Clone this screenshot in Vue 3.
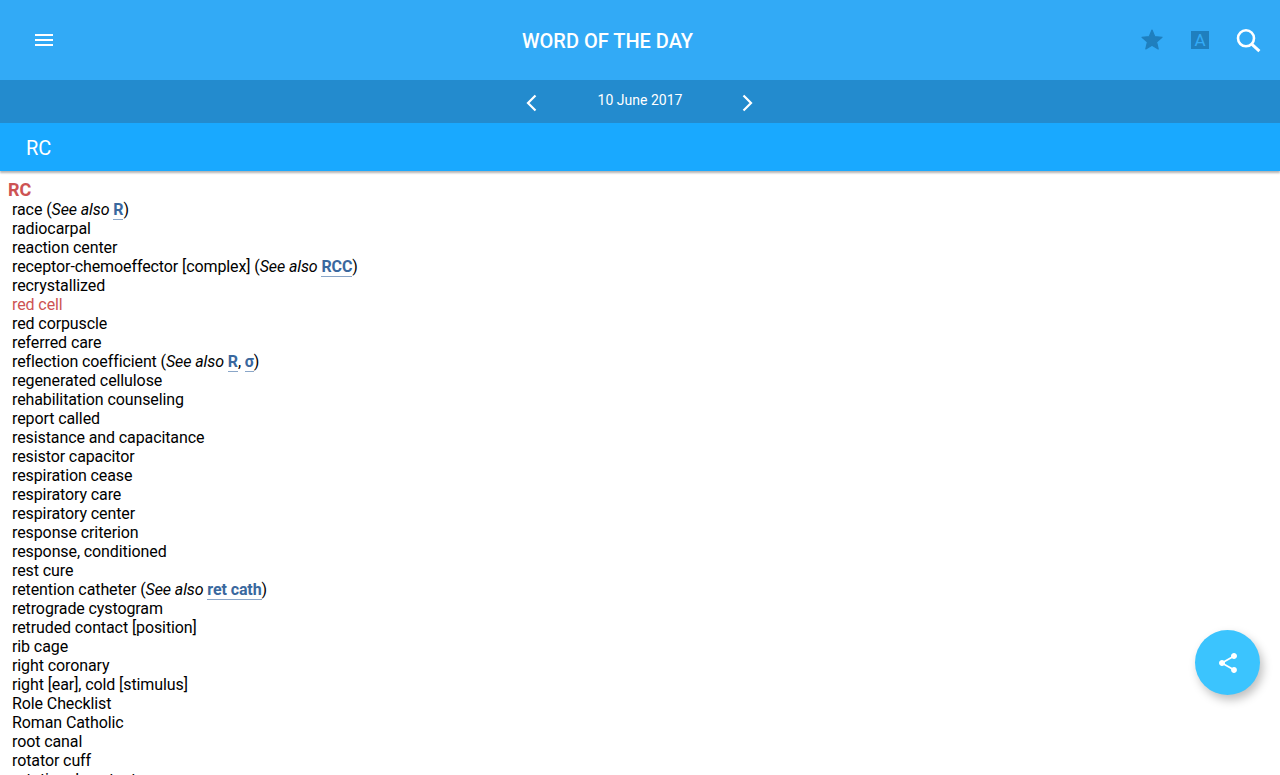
<script setup>
const terms = [
  [{ t: 'race (' }, { i: 'See also ' }, { a: 'R' }, { t: ')' }],
  [{ t: 'radiocarpal' }],
  [{ t: 'reaction center' }],
  [{ t: 'receptor-chemoeffector [complex] (' }, { i: 'See also ' }, { a: 'RCC' }, { t: ')' }],
  [{ t: 'recrystallized' }],
  [{ r: 'red cell' }],
  [{ t: 'red corpuscle' }],
  [{ t: 'referred care' }],
  [{ t: 'reflection coefficient (' }, { i: 'See also ' }, { a: 'R' }, { t: ', ' }, { a: 'σ' }, { t: ')' }],
  [{ t: 'regenerated cellulose' }],
  [{ t: 'rehabilitation counseling' }],
  [{ t: 'report called' }],
  [{ t: 'resistance and capacitance' }],
  [{ t: 'resistor capacitor' }],
  [{ t: 'respiration cease' }],
  [{ t: 'respiratory care' }],
  [{ t: 'respiratory center' }],
  [{ t: 'response criterion' }],
  [{ t: 'response, conditioned' }],
  [{ t: 'rest cure' }],
  [{ t: 'retention catheter (' }, { i: 'See also ' }, { a: 'ret cath' }, { t: ')' }],
  [{ t: 'retrograde cystogram' }],
  [{ t: 'retruded contact [position]' }],
  [{ t: 'rib cage' }],
  [{ t: 'right coronary' }],
  [{ t: 'right [ear], cold [stimulus]' }],
  [{ t: 'Role Checklist' }],
  [{ t: 'Roman Catholic' }],
  [{ t: 'root canal' }],
  [{ t: 'rotator cuff' }],
  [{ t: 'rotational contact' }],
]
</script>

<template>
  <div class="page">
    <header class="top">
      <button class="icon menu" aria-label="Menu">
        <svg width="24" height="24" viewBox="0 0 24 24"><path d="M3 6h18v2H3zM3 11h18v2H3zM3 16h18v2H3z" fill="#fff" /></svg>
      </button>
      <h1 class="title">WORD OF THE DAY</h1>
      <div class="actions">
        <span class="action">
          <svg width="24" height="24" viewBox="0 0 24 24"><path d="M12 17.270L18.180 21l-1.640-7.030L22 9.240l-7.190-.61L12 2 9.190 8.630 2 9.240l5.460 4.730L5.820 21z" fill="#1f7fbe" stroke="#1f7fbe" stroke-width="1.200" stroke-linejoin="round" /></svg>
        </span>
        <span class="action"><span class="font-box">A</span></span>
        <span class="action">
          <svg width="30" height="30" viewBox="0 0 30 30"><circle cx="13" cy="13.300" r="8" fill="none" stroke="#fff" stroke-width="2.600" /><path d="M19 19.300l7.400 6.800" stroke="#fff" stroke-width="3" fill="none" /></svg>
        </span>
      </div>
    </header>
    <nav class="dates">
      <svg class="chev" width="16" height="20" viewBox="0 0 16 20"><path d="M10.500 2.500L3 10l7.500 7.500" fill="none" stroke="#fff" stroke-width="2.200" /></svg>
      <span class="date">10 June 2017</span>
      <svg class="chev" width="16" height="20" viewBox="0 0 16 20"><path d="M3.500 2.500L11 10l-7.500 7.500" fill="none" stroke="#fff" stroke-width="2.200" /></svg>
    </nav>
    <div class="word">RC</div>
    <main class="content">
      <div class="head">RC</div>
      <div v-for="(line, n) in terms" :key="n" class="line">
        <template v-for="(p, k) in line" :key="k">
          <span v-if="p.t">{{ p.t }}</span>
          <em v-else-if="p.i">{{ p.i }}</em>
          <a v-else-if="p.a" class="link">{{ p.a }}</a>
          <span v-else class="red">{{ p.r }}</span>
        </template>
      </div>
    </main>
    <button class="fab" aria-label="Share">
      <svg width="24" height="24" viewBox="0 0 24 24"><path d="M18 16.080c-.76 0-1.440.3-1.960.77L8.910 12.700c.05-.23.09-.46.09-.7s-.04-.47-.09-.7l7.050-4.110c.54.5 1.250.81 2.040.81 1.660 0 3-1.340 3-3s-1.340-3-3-3-3 1.340-3 3c0 .24.04.47.09.7L8.040 9.810C7.500 9.310 6.790 9 6 9c-1.660 0-3 1.340-3 3s1.340 3 3 3c.79 0 1.500-.31 2.040-.81l7.120 4.160c-.05.21-.08.43-.08.65 0 1.610 1.310 2.920 2.920 2.920s2.920-1.310 2.920-2.920-1.310-2.920-2.920-2.920z" fill="#fff" /></svg>
    </button>
  </div>
</template>

<style scoped>
.page {
  position: relative;
  height: 775px;
  overflow: hidden;
  background: #fff;
  font-family: Roboto, "Liberation Sans", sans-serif;
  color: #000;
}
.top {
  height: 80px;
  background: #32aaf6;
  display: flex;
  align-items: center;
  padding: 0 8px 0 32px;
}
.icon {
  border: 0;
  background: none;
  padding: 0;
  display: flex;
}
.title {
  flex: 1;
  margin: 2px 0 0;
  padding-left: 31px;
  text-align: center;
  font-size: 20px;
  font-weight: 500;
  color: #fff;
  line-height: 24px;
}
.actions {
  display: flex;
  align-items: center;
}
.action {
  width: 48px;
  height: 48px;
  display: flex;
  align-items: center;
  justify-content: center;
}
.font-box {
  width: 18px;
  height: 18px;
  background: #1f7fbe;
  color: #33abf7;
  font-size: 17px;
  line-height: 18px;
  text-align: center;
}
.dates {
  height: 43px;
  background: #238bce;
  display: flex;
  align-items: center;
  justify-content: center;
  gap: 57px;
  color: #fff;
}
.chev { margin-top: 2px; }
.date {
  font-size: 14px;
  width: 85px;
  text-align: center;
  white-space: nowrap;
  margin-top: -4px;
}
.word {
  height: 48px;
  background: #19a9ff;
  color: #fff;
  font-size: 20px;
  line-height: 50px;
  padding-left: 26px;
  box-shadow: 0 2px 2px rgba(0, 0, 0, 0.3);
  position: relative;
}
.content {
  padding: 9px 0 0 8px;
  font-size: 16px;
  line-height: 19px;
  letter-spacing: -0.1px;
}
.head {
  color: #cd5353;
  font-weight: 700;
  font-size: 18px;
  line-height: 20px;
}
.line {
  padding-left: 4px;
  white-space: nowrap;
}
.link {
  color: #3a689e;
  font-weight: 700;
  border-bottom: 1px solid #8aa6c8;
}
.red { color: #cd5353; }
.fab {
  position: absolute;
  left: 1195px;
  top: 630px;
  width: 65px;
  height: 65px;
  border: 0;
  border-radius: 50%;
  padding: 0;
  background: #3bc4fe;
  box-shadow: 3px 5px 10px rgba(0, 0, 0, 0.25);
  display: flex;
  align-items: center;
  justify-content: center;
}
</style>
